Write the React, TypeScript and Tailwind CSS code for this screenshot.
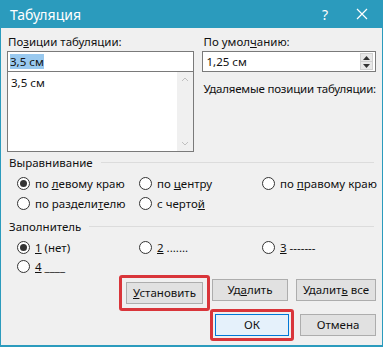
import React, { useState } from 'react';

const font = { fontFamily: '"Noto Sans", "Open Sans", sans-serif' };

const Radio: React.FC<{ checked?: boolean; children: React.ReactNode; onClick?: () => void }> = ({ checked, children, onClick }) => (
  <label className="flex items-center gap-[5px] cursor-default whitespace-nowrap" onClick={onClick}>
    <span className="w-[13px] h-[13px] shrink-0 rounded-full border border-[#333] bg-white flex items-center justify-center">
      {checked && <span className="w-[7px] h-[7px] rounded-full bg-[#333]" />}
    </span>
    <span>{children}</span>
  </label>
);

const Btn: React.FC<{ children: React.ReactNode; primary?: boolean; className?: string }> = ({ children, primary, className }) => (
  <button
    className={`h-[22px] text-[11.5px] text-[#111] ${primary ? 'bg-[#e5f1fb] border border-[#0078d7]' : 'bg-[#e1e1e1] border border-[#adadad]'} ${className ?? ''}`}
  >
    {children}
  </button>
);

const Group: React.FC<{ title: string; children: React.ReactNode }> = ({ title, children }) => (
  <div>
    <div className="flex items-center gap-2 pl-[8px] pr-[8px]">
      <span>{title}</span>
      <span className="flex-1 h-px bg-[#dcdcdc]" />
    </div>
    {children}
  </div>
);

export default function App() {
  const [align, setAlign] = useState(0);
  const [fill, setFill] = useState(0);

  return (
    <div className="w-[383px] h-[347px] bg-[#2b9bbd] flex flex-col text-[11.5px] text-[#111]" style={font}>
      {/* title bar */}
      <div className="h-[28px] flex items-center pl-[10px] text-white text-[14px]">
        <span className="flex-1">Табуляция</span>
        <span className="w-[20px] text-center mr-[21px]">?</span>
        <svg width="12" height="12" viewBox="0 0 12 12" className="mr-[15px]">
          <path d="M1 1 L11 11 M11 1 L1 11" stroke="white" strokeWidth="1.2" />
        </svg>
      </div>

      <div className="flex-1 mx-[1px] mb-[2px] bg-[#f0f0f0] flex flex-col">
        {/* top block */}
        <div className="flex pt-[5px]">
          <div className="w-[197px] pl-[6px]">
            <div className="h-[18px] leading-[18px] pl-[1px]">
              По<span className="underline">з</span>иции табуляции:
            </div>
            <div className="h-[21px] bg-white border border-[#7a7a7a] flex items-center pl-[2px]">
              <span className="bg-[#99c9ef] leading-[15px]">3,5 см</span>
            </div>
            <div className="h-[80px] bg-white border border-[#7a7a7a] border-t-0 flex">
              <div className="flex-1 pl-[3px] pt-[2px]">3,5 см</div>
              <div className="w-[16px] bg-[#f0f0f0] flex flex-col items-center justify-between py-[5px]">
                <svg width="8" height="5" viewBox="0 0 8 5"><path d="M1 4 L4 1 L7 4" stroke="#c0c0c0" fill="none" /></svg>
                <svg width="8" height="5" viewBox="0 0 8 5"><path d="M1 1 L4 4 L7 1" stroke="#c0c0c0" fill="none" /></svg>
              </div>
            </div>
          </div>
          <div className="flex-1 pl-[8px] pr-[6px]">
            <div className="h-[18px] leading-[18px] pl-[1px]">
              По умол<span className="underline">ч</span>анию:
            </div>
            <div className="h-[21px] bg-white border border-[#7a7a7a] flex items-center pl-[3px]">
              <span className="flex-1">1,25 см</span>
              <div className="w-[13px] h-[17px] mr-[2px] flex flex-col border border-[#d0d0d0]">
                <div className="flex-1 bg-[#e8e8e8] flex items-center justify-center border-b border-[#d0d0d0]">
                  <svg width="7" height="4" viewBox="0 0 7 4"><path d="M0 4 L3.5 0 L7 4 Z" fill="#333" /></svg>
                </div>
                <div className="flex-1 bg-[#e8e8e8] flex items-center justify-center">
                  <svg width="7" height="4" viewBox="0 0 7 4"><path d="M0 0 L3.5 4 L7 0 Z" fill="#333" /></svg>
                </div>
              </div>
            </div>
            <div className="mt-[8px] pl-[1px] whitespace-nowrap tracking-[-0.2px]">Удаляемые позиции табуляции:</div>
          </div>
        </div>

        {/* alignment */}
        <div className="mt-[2px]">
          <Group title="Выравнивание">
            <div className="grid grid-cols-[122px_123px_1fr] pl-[16px] mt-[4px] gap-y-[2px]">
              <Radio checked={align === 0} onClick={() => setAlign(0)}>по <span className="underline">л</span>евому краю</Radio>
              <Radio checked={align === 1} onClick={() => setAlign(1)}>по <span className="underline">ц</span>ентру</Radio>
              <Radio checked={align === 2} onClick={() => setAlign(2)}>по <span className="underline">п</span>равому краю</Radio>
              <Radio checked={align === 3} onClick={() => setAlign(3)}>по раздели<span className="underline">т</span>елю</Radio>
              <Radio checked={align === 4} onClick={() => setAlign(4)}>с черто<span className="underline">й</span></Radio>
            </div>
          </Group>
        </div>

        {/* fill */}
        <div className="mt-[6px]">
          <Group title="Заполнитель">
            <div className="grid grid-cols-[122px_123px_1fr] pl-[16px] mt-[4px] gap-y-[2px]">
              <Radio checked={fill === 0} onClick={() => setFill(0)}><span className="underline">1</span> (нет)</Radio>
              <Radio checked={fill === 1} onClick={() => setFill(1)}><span className="underline">2</span> .......</Radio>
              <Radio checked={fill === 2} onClick={() => setFill(2)}><span className="underline">3</span> -------</Radio>
              <Radio checked={fill === 3} onClick={() => setFill(3)}><span className="underline">4</span> ____</Radio>
            </div>
          </Group>
        </div>

        {/* buttons */}
        <div className="flex justify-end pr-[6px] mt-[3px] gap-[6px]">
          <div className="p-[4px] -my-[4px] -mr-[4px] rounded-[3px] border-[3px] border-[#d9353a] flex">
            <Btn className="w-[77px]"><span className="underline">У</span>становить</Btn>
          </div>
          <Btn className="w-[76px]">Уд<span className="underline">а</span>лить</Btn>
          <Btn className="w-[80px] ml-[2px]">Удалит<span className="underline">ь</span> все</Btn>
        </div>
        <div className="flex justify-end pr-[6px] mt-[7px] gap-[6px]">
          <div className="p-[2px] -my-[5px] rounded-[3px] border-[3px] border-[#d9353a] flex">
            <Btn primary className="w-[74px]">ОК</Btn>
          </div>
          <Btn className="w-[76px]">Отмена</Btn>
        </div>
      </div>
    </div>
  );
}
